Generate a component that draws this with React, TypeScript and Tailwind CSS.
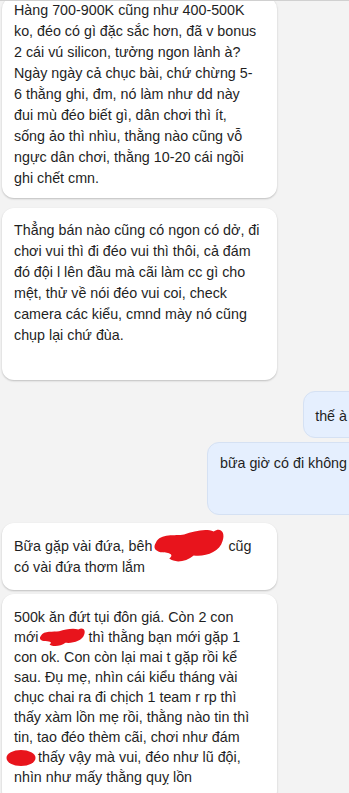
const font = { fontFamily: '"Liberation Sans", Arial, sans-serif' };

function Blob({ w, h, className }: { w: number; h: number; className?: string }) {
  return (
    <svg width={w} height={h} viewBox="0 0 100 50" preserveAspectRatio="none" className={className}>
      <path
        d="M4 22 C10 10 30 14 42 12 C55 8 70 4 82 8 C92 2 98 10 94 20 C90 34 70 40 55 38 C45 46 30 48 22 42 C30 36 20 34 10 34 C2 32 0 28 4 22 Z"
        fill="#e8141c"
      />
    </svg>
  );
}

function Incoming({ children, className = "" }: { children: React.ReactNode; className?: string }) {
  return (
    <div
      className={`w-[275px] ml-[2px] bg-white rounded-xl shadow-[0_1px_2px_rgba(0,0,0,0.22)] pl-[12px] pr-3 text-[14.3px] text-[#1f1f1f] whitespace-nowrap ${className}`}
    >
      {children}
    </div>
  );
}

function Outgoing({ children, className = "" }: { children: React.ReactNode; className?: string }) {
  return (
    <div className="flex justify-end">
      <div
        className={`-mr-[40px] bg-[#e5effe] border border-[#d5e1f3] rounded-xl pr-[41px] text-[14.3px] leading-[21px] text-[#1f1f1f] whitespace-nowrap ${className}`}
      >
        {children}
      </div>
    </div>
  );
}

export default function App() {
  return (
    <div style={font} className="w-[349px] h-[793px] overflow-hidden bg-[#f3f3f3] border-t border-[#d0d0d0]">
      <div className="-mt-[4px] flex flex-col">
        <Incoming className="leading-[21px] pt-[3px] pb-[9px]">
          <div>Hàng 700-900K cũng như 400-500K</div>
          <div>ko, đéo có gì đặc sắc hơn, đã v bonus</div>
          <div>2 cái vú silicon, tưởng ngon lành à?</div>
          <div>Ngày ngày cả chục bài, chứ chừng 5-</div>
          <div>6 thằng ghi, đm, nó làm như dd này</div>
          <div>đui mù đéo biết gì, dân chơi thì ít,</div>
          <div>sống ảo thì nhìu, thằng nào cũng vỗ</div>
          <div>ngực dân chơi, thằng 10-20 cái ngồi</div>
          <div>ghi chết cmn.</div>
        </Incoming>

        <Incoming className="mt-[10px] leading-[21px] pt-[12px] pb-[34px]">
          <div>Thẳng bán nào cũng có ngon có dở, đi</div>
          <div>chơi vui thì đi đéo vui thì thôi, cả đám</div>
          <div>đó đội l lên đầu mà cãi làm cc gì cho</div>
          <div>mệt, thử về nói đéo vui coi, check</div>
          <div>camera các kiểu, cmnd mày nó cũng</div>
          <div>chụp lại chứ đùa.</div>
        </Incoming>

        <div className="mt-[11px]">
          <Outgoing className="pl-[11px] pt-[14px] pb-[10px]">thế à</Outgoing>
        </div>
        <div className="mt-[4px]">
          <Outgoing className="pl-[12px] pt-[10px] pb-[40px]">bữa giờ có đi không</Outgoing>
        </div>

        <Incoming className="mt-[8px] leading-[21px] pt-[13px] pb-[12px]">
          <div>
            Bữa gặp vài đứa, bêh
            <span className="relative inline-block w-[76px] h-[14px] align-middle">
              <Blob w={74} h={40} className="absolute left-[1px] top-[-15px]" />
            </span>
            cũg
          </div>
          <div>có vài đứa thơm lắm</div>
        </Incoming>

        <Incoming className="mt-[4px] leading-[20px] pt-[13px] pb-4">
          <div>500k ăn đứt tụi đôn giá. Còn 2 con</div>
          <div>
            mới
            <span className="relative inline-block w-[50px] h-[14px] align-middle">
              <Blob w={48} h={22} className="absolute left-[1px] top-[-5px]" />
            </span>
            thì thằng bạn mới gặp 1
          </div>
          <div>con ok. Con còn lại mai t gặp rồi kể</div>
          <div>sau. Đụ mẹ, nhìn cái kiểu tháng vài</div>
          <div>chục chai ra đi chịch 1 team r rp thì</div>
          <div>thấy xàm lồn mẹ rồi, thằng nào tin thì</div>
          <div>tin, tao đéo thèm cãi, chơi như đám</div>
          <div>
            <span className="relative inline-block w-[24px] h-[14px] align-middle">
              <svg width="30" height="18" viewBox="0 0 30 18" className="absolute left-[-8px] top-[-2px]">
                <ellipse cx="15" cy="9" rx="14.5" ry="8" fill="#e8141c" />
              </svg>
            </span>
            thấy vậy mà vui, đéo như lũ đội,
          </div>
          <div>nhìn như mấy thằng quỵ lồn</div>
        </Incoming>
      </div>
    </div>
  );
}
